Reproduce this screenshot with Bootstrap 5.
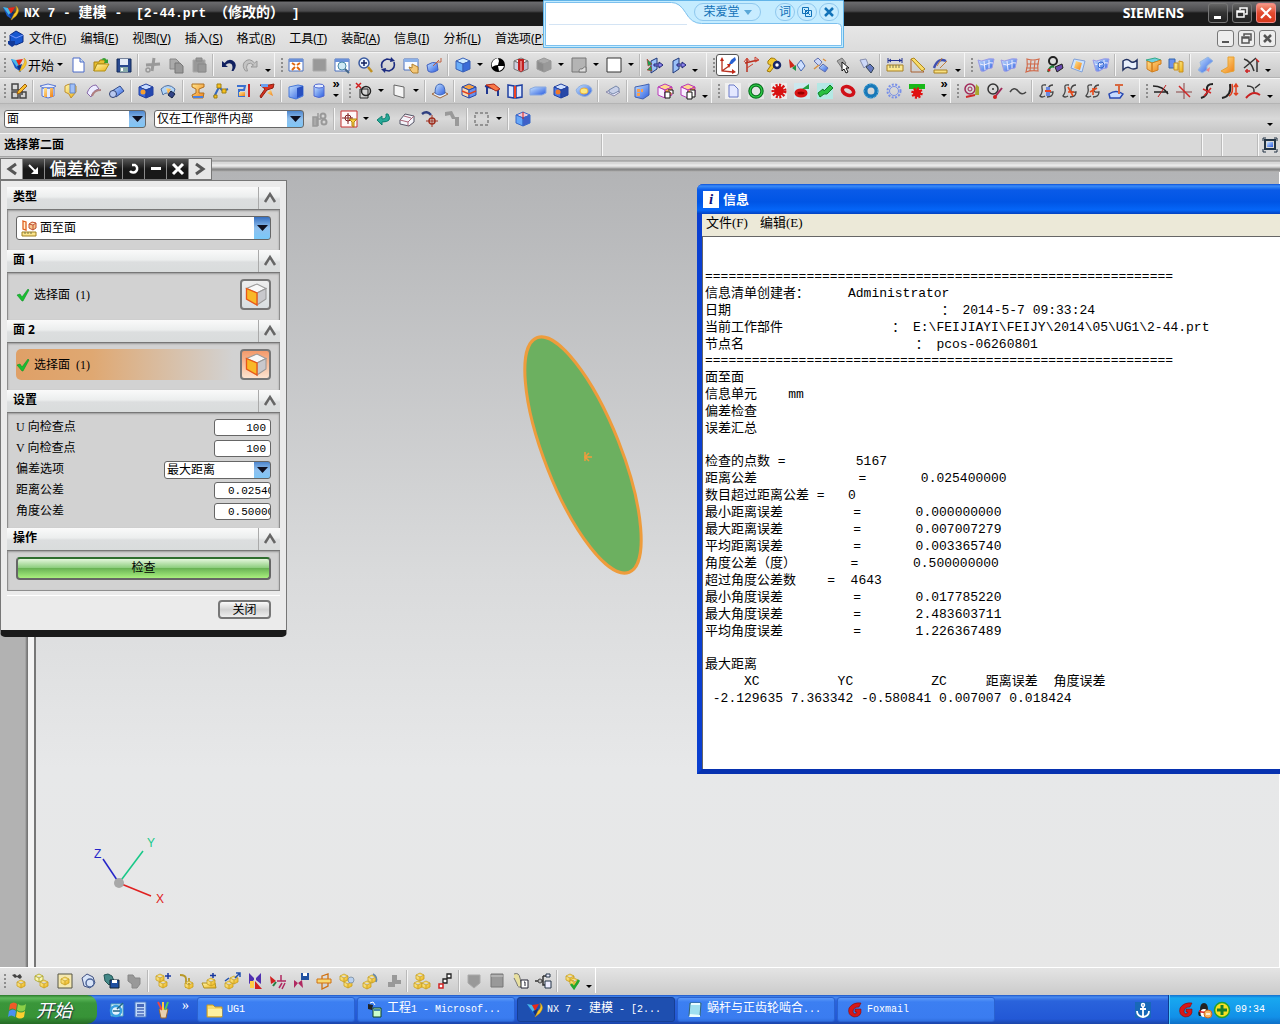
<!DOCTYPE html>
<html lang="zh-CN">
<head>
<meta charset="utf-8">
<meta name="viewport" content="width=device-width, initial-scale=1">
<title>NX 7 - 建模</title>
<link href="https://cdn.jsdelivr.net/npm/bootstrap@5.3.0/dist/css/bootstrap.min.css" rel="stylesheet">
<style>
:root{--ui:"Liberation Serif","Noto Sans CJK SC",serif;--sans:"Noto Sans","Noto Sans CJK SC",sans-serif;--mono:"Liberation Mono","Noto Sans CJK SC",monospace}
body{font:12px/16px var(--ui);color:#000;background:#d6d6d6}
button,input,select{font:inherit;color:inherit}
svg{display:block;flex:none}
a{color:inherit;text-decoration:none}
.bare{border:0;background:none;padding:0}
.titlebar{height:26px;background:linear-gradient(#000 0 1px,#6b6b6e 2px,#4b4b4d 11px,#1b1b1b 13px,#1b1b1b);color:#fff;font:bold 13px/24px var(--mono);padding:0 4px 0 2px}
.doctitle{white-space:pre;margin-left:4px}
.doctitle span{font-size:14px}
.docname{margin-left:6px}
.brand{font:bold 14px/24px "Noto Sans",sans-serif}
.wbtn{width:20px;height:20px;border:1px solid #777;border-radius:3px;background:linear-gradient(#666,#333 50%,#222);display:grid;place-items:center;padding:0}
.wbtn.red{background:linear-gradient(#f59a85,#e2492e 50%,#d8391c);border-color:#e88}
.wbtn.doc{width:17px;height:17px;background:#eee;border:1px solid #777}
.menubar{height:26px;background:linear-gradient(#e6e6e6,#dcdcdc);border-bottom:1px solid #c4c4c4;gap:14px;font:12px/24px var(--sans)}
.toolrow{height:26px;background:linear-gradient(#e4e4e4,#c9c9c9);border-bottom:1px solid #b4b4b4;box-shadow:inset 0 1px #f4f4f4}
.strip{display:flex;align-items:center;height:25px}
.strip+.strip{border-left:1px solid #f5f5f5}
.strip+.strip .grip{margin-left:2px}
.strip.apart{margin-left:5px}
.grip{width:7px;height:16px;background:radial-gradient(circle,#8d8d8d 1px,#0000 1px) 3px 0/4px 4px repeat-y;flex:none}
.tool{width:23px;height:22px;display:grid;place-items:center;border:0;background:none;padding:0;flex:none}
.tool.on{background:#fff;border:1px solid #555;border-radius:3px}
.startmenu{width:47px;padding-left:3px}
.startmenu span{font:13px/16px var(--sans)}
.drop{width:12px;height:22px;border:0;background:none;padding:0;flex:none;display:grid;place-items:center}
.drop::after{content:"";border:3px solid #0000;border-top-color:#000;border-bottom:0}
.drop.low{align-items:end}
.drop.low::after{margin-bottom:4px}
.more{width:12px;height:22px;font:bold 13px/8px "Liberation Sans",sans-serif;text-align:center}
.more::after{content:"";display:block;margin:6px 0 0 3px;width:6px;border:3px solid #0000;border-top-color:#000;border-bottom:0}
.spacer{width:10px}
.split{width:6px;height:22px;flex:none;background:linear-gradient(90deg,#0000 2px,#b9b9b9 2px 3px,#f6f6f6 3px 4px,#0000 4px)}
.pickbar{height:29px;background:linear-gradient(#c2c2c2,#d9d9d9 50%,#c6c6c6);padding:0 4px}
.combo{appearance:none;height:18px;border:1px solid #666;border-radius:3px;line-height:14px;padding:0 20px 0 2px;outline:0;
background:url("data:image/svg+xml,%3Csvg xmlns='http://www.w3.org/2000/svg' width='16' height='22'%3E%3ClinearGradient id='a' x2='0' y2='1'%3E%3Cstop stop-color='%23356fc0'/%3E%3Cstop offset='.5' stop-color='%2390c0ee'/%3E%3Cstop offset='1' stop-color='%2378c8f8'/%3E%3C/linearGradient%3E%3Cpath fill='url(%23a)' d='M0 0h16v22H0z'/%3E%3Cpath d='M3 8h11l-5.500 6z' fill='%23101020'/%3E%3C/svg%3E") right center no-repeat #fff}
.filter{width:142px}.scope{width:150px}.option{width:107px}
.kindsel{height:24px;padding-left:23px}
.statusbar{height:24px;background:#d9d9d9;border-top:1px solid #f4f4f4;border-bottom:1px solid #a4a4a4;font-weight:bold}
.cell{height:100%;border-left:1px solid #f8f8f8;box-shadow:-1px 0 #bbb}
.prompt{width:47%}.cell.a{width:20px}.cell.b{width:36px}.cell.c{width:22px}
.dockedge{height:15px;background:linear-gradient(#c2c2c2 0 3px,#8f8f8f 4px,#d8d8d8 5px 7px,#f0f0f0 8px,#d4d4d4 10px,#888 12px 13px,#bbb)}
.gutter{width:36px;background:linear-gradient(90deg,#b2b2b2 25px,#777 27px 28px,#f4f4f4 28px 34px,#777 34px)}
.scene{background:linear-gradient(#b3b4b6,#d9dadb 50%,#e7e8e9 75%,#e7e7e7);border-right:1px solid #fff}
.dlg{position:absolute;left:0;top:1px;width:287px}
.dlgtabs{height:22px;width:212px;background:#1c1c1c;color:#fff;border:1px solid #777}
.dlgtabs>button{width:22px;border:0;border-right:1px solid #888;padding:0;background:linear-gradient(#555,#181818 50%);display:grid;place-items:center}
.dlgtabs>.lite{background:#e6e6e6}
.dlgtabs h1{font:500 17px/19px var(--sans);background:linear-gradient(#555,#181818 50%);border-right:1px solid #888;text-align:center}
.dlgbody{background:#ebebeb;border:1px solid #777;border-bottom:7px solid #1a1a1a;border-radius:0 0 5px 5px;padding:6px 6px 11px}
.sect{height:23px;border:0;border-bottom:1px solid #777;background:linear-gradient(#fafafa,#eceeee 45%,#dcdedf 55%,#d9dcdc);font:bold 12px/20px var(--sans);padding:0 0 0 6px}
.sect svg{border-left:1px solid #aaa}
.pane{background:#d2d2d2;border:1px solid #8e8e8e;border-top:0;border-bottom:0;padding:0 8px 4px;box-shadow:inset 0 1px 2px #999}
.pane.kind{height:40px}
.pane.pick{height:47px}
.pane.settings{height:115px;padding-top:6px;row-gap:4px}
.settings>div{height:17px}
.pane.act{height:40px;padding-top:6px;border-bottom:1px solid #8e8e8e}
.pickrow{height:31px;border-radius:5px 0 0 5px}
.pickrow.hot{background:linear-gradient(90deg,#dfa067,#dfa872 30%,#d2d2d2 85%)}
.facebtn{width:31px;height:31px;border:2px solid #777;border-radius:4px;background:linear-gradient(#eee,#d9dfe2);display:grid;place-items:center;padding:0}
.hot .facebtn{background:linear-gradient(#f39a6b,#fde3cf)}
.num{width:57px;height:17px;border:1px solid #666;border-radius:3px;text-align:right;padding:0 4px;font:11px/15px var(--mono)}
.num.clipped{text-align:left;padding:0 0 0 13px}
.go{height:23px;border:2px solid #666;border-top-color:#2e6d2e;border-radius:4px;background:linear-gradient(#e4f6dc,#8fcf80 45%,#6ab455 50%,#a9f07e);padding:0;line-height:17px}
.foot{padding:4px 9px 0 0;margin-top:4px;border-top:1px solid #fff}
.closebtn{width:53px;height:19px;border:2px solid #777;border-radius:4px;background:linear-gradient(#fafafa,#d2d2d2 50%,#eee);padding:0;line-height:14px}
.info{position:absolute;left:697px;right:0;top:27px;height:590px;border:solid #0a3fd0;border-width:0 0 5px 5px;border-bottom-color:#0732b0;border-radius:6px 0 0 0;background:#ece9d8}
.infotitle{height:30px;margin-left:-5px;padding-left:6px;border-radius:6px 0 0 0;background:linear-gradient(#0a50d8,#3b8cf8 2px,#0a5be8 6px,#0055e5 18px,#0566f8 26px,#0340c0);color:#fff;font:bold 13px/16px var(--sans)}
.badge-i{width:16px;height:17px;background:#fff;color:#10107a;font:italic bold 15px/16px "Liberation Serif",serif;text-align:center}
.infomenu{height:22px;gap:12px;padding-left:4px;font-size:13px;line-height:18px}
.report{margin:0;overflow:hidden;background:#fff;border:1px solid #666;border-right:0;border-bottom:0;padding:31px 0 0 2px;font:13px/17px var(--mono);color:#000}
.report div{height:17px;white-space:pre}
.report .thin{height:16px;line-height:16px}
.lyric{position:absolute;left:543px;top:0;width:301px;height:48px;color:#1272b8}
.lyric .over{position:absolute;inset:3px 5px auto auto;gap:2px}
.pill{width:67px;height:18px;border:1px solid #8fc8ee;border-radius:9px;background:#c8ecff;padding:0;line-height:15px;margin-right:12px}
.dot{width:20px;height:18px;border:1px solid #8fc8ee;border-radius:9px;background:#c8ecff;display:grid;place-items:center;padding:0;line-height:15px}
.bottombar{height:28px;background:linear-gradient(#e4e4e4,#cbcbcb);border-top:1px solid #fff}
.taskbar{height:29px;background:linear-gradient(#1a56c8,#4a8bf0 2px,#2a63dc 6px,#2258d6 24px,#1b45a8);color:#fff;font:10px/16px var(--mono)}
.taskbar .han{font-size:12px}
.startbtn{width:97px;border:0;border-radius:0 10px 10px 0;background:linear-gradient(#2a7a2a,#5cb85a 3px,#3a963a 8px,#379337 22px,#256a25);color:#fff;font:italic 18px/26px var(--sans);text-shadow:1px 1px 1px #234;padding:0 0 0 8px}
.quick{padding-left:8px}
.chev{font:14px/10px var(--ui);margin:0 0 8px 8px}
.taskset{margin-left:8px;gap:2px}
.task{flex:0 1 158px;height:25px;border:1px solid #2a62d0;border-radius:3px;background:linear-gradient(#5c9af8,#3c7ff2 4px,#3a7cf0 20px,#3070e0);color:#fff;padding:0 8px;gap:3px;overflow:hidden;white-space:pre}
.task.now{background:#1e4fb0;border-color:#173f94}
.tray{width:112px;background:linear-gradient(#1470d0,#18a8f0 3px,#1290e8 22px,#0e70c8);border-left:1px solid #0c3c90;box-shadow:inset 1px 0 #4cc8ff;padding-left:8px}
</style>
<script src="https://cdn.jsdelivr.net/npm/bootstrap@5.3.0/dist/js/bootstrap.bundle.min.js"></script>
</head>
<body class="vh-100 d-flex flex-column overflow-hidden position-relative">
<svg width="0" height="0" class="position-absolute"><defs>
<linearGradient id="gb" x2="1" y2="1"><stop stop-color="#c8e4ff"/><stop offset="1" stop-color="#2a5ce0"/></linearGradient>
<linearGradient id="gy" x2="1" y2="1"><stop stop-color="#fff8b0"/><stop offset="1" stop-color="#eeb010"/></linearGradient>
<linearGradient id="go" x2="1" y2="1"><stop stop-color="#ffe890"/><stop offset="1" stop-color="#f08018"/></linearGradient>
</defs></svg>

<header class="titlebar d-flex align-items-center flex-shrink-0">
<span data-icon="nx"></span><span class="doctitle">NX 7 - <span>建模</span> -</span><span class="doctitle docname"> [2-44.prt <span>（修改的）</span> ]</span>
<span class="brand ms-auto me-4">SIEMENS</span>
<div class="d-flex gap-1">
<button class="wbtn" aria-label="最小化"><svg width="14" height="14"><path d="M3 10h7v3H3z" fill="#fff"/></svg></button>
<button class="wbtn" aria-label="还原"><svg width="14" height="14" fill="none" stroke="#fff" stroke-width="1.500"><path d="M5 4V2h7v6h-2M2 5h7v6H2zM2 6h7"/></svg></button>
<button class="wbtn red" aria-label="关闭"><svg width="14" height="14" stroke="#fff" stroke-width="2.200"><path d="M2 2l10 10M12 2 2 12"/></svg></button>
</div></header>

<nav class="menubar d-flex align-items-center flex-shrink-0 pe-1">
<div class="d-flex align-items-center"><span class="grip"></span><span data-icon="part" class="me-1"></span><a href="#">文件(<u>F</u>)</a></div>
<a href="#">编辑(<u>E</u>)</a><a href="#">视图(<u>V</u>)</a><a href="#">插入(<u>S</u>)</a><a href="#">格式(<u>R</u>)</a><a href="#">工具(<u>T</u>)</a><a href="#">装配(<u>A</u>)</a><a href="#">信息(<u>I</u>)</a><a href="#">分析(<u>L</u>)</a><a href="#">首选项(<u>P</u>)</a>
<div class="d-flex ms-auto gap-1">
<button class="wbtn doc" aria-label="最小化窗口"><svg width="13" height="13"><path d="M3 9h7v2H3z" fill="#555"/></svg></button>
<button class="wbtn doc" aria-label="还原窗口"><svg width="13" height="13" fill="none" stroke="#555" stroke-width="1.500"><path d="M4 4V2h7v6H9M2 5h7v6H2zM2 6h7"/></svg></button>
<button class="wbtn doc" aria-label="关闭窗口"><svg width="13" height="13" stroke="#555" stroke-width="2.500"><path d="M3 3l7 7M10 3l-7 7"/></svg></button>
</div></nav>

<div class="toolrow d-flex flex-shrink-0">
<div class="strip" data-tools="grip start new open save | cut copy paste | undo redo low"></div>
<div class="strip" data-tools="grip fit zoomsel zoombox zoom rotate pan persp | shade drop wire section graycube drop sheet drop white drop | exitg exit low"></div>
<div class="strip apart" data-tools="grip wcs* axes key movecs snap pointer snap2 | measure angle curvem low"></div>
<div class="strip" data-tools="grip surf surf2 mesh sweep ruled surf3 | bound layers studio | blend elbow trim low"></div>
</div>
<div class="toolrow d-flex flex-shrink-0">
<div class="strip" data-tools="grip sketch | extrude revolve sheetf tube | hole boss | spring path mirror trimred | block cyl more"></div>
<div class="strip" data-tools="grip xcircle drop plane drop | dome | edge offset book slab holec donut | pad | pattern paste1 paste2 low"></div>
<div class="strip" data-tools="grip page gring gearr helix screw ringr ringb gearb rack gap more"></div>
<div class="strip" data-tools="grip spiral circ wave | cline cline2 cline3 projc low"></div>
<div class="strip" data-tools="grip tcurve cross scurve jcurve arcs low"></div>
</div>
<div class="pickbar d-flex align-items-center flex-shrink-0">
<select class="combo filter" aria-label="类型过滤器"><option>面</option></select>
<select class="combo scope ms-2 me-1" aria-label="选择范围"><option>仅在工作部件内部</option></select>
<div class="strip flex-grow-1" data-tools="graygears | target drop back eraser cross2 grayarr | dashbox drop | redcube push low"></div>
</div>
<div class="statusbar d-flex align-items-center flex-shrink-0">
<span class="ps-1 prompt">选择第二面</span><span class="cell flex-grow-1"></span>
<span class="cell a"></span><span class="cell b"></span><span class="cell c d-flex align-items-center justify-content-center"><svg width="16" height="16" fill="none" stroke="#234"><path d="M1 4V1h3M12 1h3v3M15 12v3h-3M4 15H1v-3"/><path d="M3 3h10v9H3z" stroke-width="2"/><path d="M5 5h6v5H5z" fill="url(#gb)" stroke="none"/></svg></span>
</div>

<main class="flex-grow-1 d-flex flex-column position-relative overflow-hidden">
<div class="dockedge flex-shrink-0"></div>
<div class="d-flex flex-grow-1"><div class="gutter"></div>
<svg class="scene flex-grow-1 h-100" role="img" aria-label="模型视图">
<g transform="translate(547 283)"><ellipse rx="38" ry="126" transform="rotate(-21.500)" fill="#6cb060" stroke="#ee9c3c" stroke-width="3"/><path d="M1 2h8M6-2 2 2l4 4M2-3v9" stroke="#ee9c3c" stroke-width="1.500" fill="none"/></g>
<g transform="translate(83 711)" fill="none" stroke-width="1.500"><path d="M0 0-16-24" stroke="#2424c8"/><path d="M0 0l24-32" stroke="#18c888"/><path d="M0 0l32 13" stroke="#e02020"/><circle r="5" fill="#a8a8a8"/>
<g font-family="Liberation Sans" font-size="12" stroke="none"><text x="-25" y="-25" fill="#2424c8">Z</text><text x="28" y="-36" fill="#18c888">Y</text><text x="37" y="20" fill="#e02020">X</text></g></g>
</svg></div>

<section class="dlg">
<div class="dlgtabs d-flex">
<button class="lite" aria-label="上一个"><svg width="14" height="14" fill="none" stroke="#555" stroke-width="3"><path d="M11 2 4 7l7 5"/></svg></button>
<button aria-label="固定"><svg width="14" height="14" fill="none" stroke="#fff" stroke-width="2"><path d="M2 3l7 7"/><path d="M11 5v7H4z" fill="#fff" stroke="none"/></svg></button>
<h1 class="m-0 flex-grow-1">偏差检查</h1>
<button aria-label="重置"><svg width="14" height="14" fill="none" stroke="#fff" stroke-width="2.500"><path d="M5 3h3a4 4 0 1 1-5 6"/></svg></button>
<button aria-label="折叠"><svg width="14" height="14"><path d="M2 5h10v3H2z" fill="#fff"/></svg></button>
<button aria-label="关闭对话框"><svg width="14" height="14" stroke="#fff" stroke-width="3"><path d="M2 2l10 10M12 2 2 12"/></svg></button>
<button class="lite border-0" aria-label="下一个"><svg width="14" height="14" fill="none" stroke="#555" stroke-width="3"><path d="M3 2l7 5-7 5"/></svg></button>
</div>
<div class="dlgbody d-flex flex-column">
<button class="sect d-flex justify-content-between">类型<span data-up></span></button>
<div class="pane kind d-flex align-items-center position-relative"><select class="combo w-100 kindsel" aria-label="类型"><option>面至面</option></select><span class="position-absolute ms-1" data-icon="facepair"></span></div>
<button class="sect d-flex justify-content-between">面 1<span data-up></span></button>
<div class="pane pick d-flex align-items-center"><div class="pickrow d-flex align-items-center flex-grow-1"><span data-icon="tick"></span><span>选择面&nbsp; (1)</span><button class="facebtn ms-auto" aria-label="选择面 1" data-icon="face"></button></div></div>
<button class="sect d-flex justify-content-between">面 2<span data-up></span></button>
<div class="pane pick d-flex align-items-center"><div class="pickrow hot d-flex align-items-center flex-grow-1"><span data-icon="tick"></span><span>选择面&nbsp; (1)</span><button class="facebtn ms-auto" aria-label="选择面 2" data-icon="face"></button></div></div>
<button class="sect d-flex justify-content-between">设置<span data-up></span></button>
<div class="pane settings d-flex flex-column">
<div class="d-flex justify-content-between"><label for="u">U 向检查点</label><input id="u" class="num" value="100"></div>
<div class="d-flex justify-content-between"><label for="v">V 向检查点</label><input id="v" class="num" value="100"></div>
<div class="d-flex justify-content-between"><label for="opt">偏差选项</label><select id="opt" class="combo option"><option>最大距离</option></select></div>
<div class="d-flex justify-content-between"><label for="dt">距离公差</label><input id="dt" class="num clipped" value="0.025400000"></div>
<div class="d-flex justify-content-between"><label for="at">角度公差</label><input id="at" class="num clipped" value="0.500000000"></div>
</div>
<button class="sect d-flex justify-content-between">操作<span data-up></span></button>
<div class="pane act"><button class="go w-100">检查</button></div>
<div class="foot d-flex justify-content-end"><button class="closebtn">关闭</button></div>
</div>
</section>

<section class="info d-flex flex-column">
<div class="infotitle d-flex align-items-center gap-1"><span class="badge-i">i</span><span>信息</span></div>
<div class="infomenu d-flex"><a href="#">文件(F)</a><a href="#">编辑(E)</a></div>
<div class="report flex-grow-1"><div>============================================================</div><div>信息清单创建者：     Administrator</div><div>日期                           ： 2014-5-7 09:33:24</div><div>当前工作部件              ： E:\FEIJIAYI\FEIJY\2014\05\UG1\2-44.prt</div><div>节点名                      ： pcos-06260801</div><div class="thin">============================================================</div><div>面至面</div><div>信息单元    mm</div><div>偏差检查</div><div>误差汇总</div><div class="thin"> </div><div>检查的点数 =         5167</div><div>距离公差             =       0.025400000</div><div>数目超过距离公差 =   0</div><div>最小距离误差         =       0.000000000</div><div>最大距离误差         =       0.007007279</div><div>平均距离误差         =       0.003365740</div><div>角度公差（度）       =       0.500000000</div><div>超过角度公差数    =  4643</div><div>最小角度误差         =       0.017785220</div><div>最大角度误差         =       2.483603711</div><div>平均角度误差         =       1.226367489</div><div class="thin"> </div><div>最大距离</div><div>     XC          YC          ZC     距离误差  角度误差</div><div> -2.129635 7.363342 -0.580841 0.007007 0.018424</div></div>
</section>
</main>

<div class="bottombar d-flex flex-shrink-0"><div class="strip border-end border-white" data-tools="grip find openc yframe poly savec graypuz | addc yarm newc movec bow constr bowsave explode chainc swap grayplus | tree chain | grayshield graybox clipinfo nodes | import low"></div></div>

<footer class="taskbar d-flex align-items-stretch flex-shrink-0">
<button class="startbtn d-flex align-items-center gap-2"><svg width="20" height="20"><path d="M2 4q4-3 7 0L8 10q-4-3-7 0z" fill="#f05a28"/><path d="M10 4q4 3 8 0l-1 6q-4 3-8 0z" fill="#8cd048"/><path d="M1 11q4-3 7 0l-1 6q-4-3-7 0z" fill="#4a90f0"/><path d="M9 11q4 3 8 0l-1 6q-4 3-8 0z" fill="#fcd030"/></svg>开始</button>
<div class="d-flex align-items-center quick"><span class="tool" data-icon="edge2"></span><span class="tool" data-icon="calc"></span><span class="tool" data-icon="pens"></span><span class="chev">»</span></div>
<div class="d-flex align-items-center flex-grow-1 taskset">
<button class="task d-flex align-items-center"><span data-icon="folder"></span><span>UG1</span></button>
<button class="task d-flex align-items-center"><span data-icon="vb"></span><span><span class="han">工程</span>1 - Microsof...</span></button>
<button class="task now d-flex align-items-center"><span data-icon="nx"></span><span>NX 7 - <span class="han">建模</span> - [2...</span></button>
<button class="task d-flex align-items-center"><span data-icon="note"></span><span><span class="han">蜗杆与正齿轮啮合</span>...</span></button>
<button class="task d-flex align-items-center"><span data-icon="fox"></span><span>Foxmail</span></button>
<span class="ms-auto me-3" data-icon="anchor"></span></div>
<div class="tray d-flex align-items-center"><span data-icon="fox"></span><span data-icon="qq"></span><span data-icon="plus"></span><span class="ms-1">09:34</span></div>
</footer>

<aside class="lyric"><svg width="301" height="48"><path d="M0.500 0.500h300v47H.5z" fill="#c4ecff" stroke="#62b4e8"/><path d="M2.500 2.500h126q8 0 14 10 6 11 16 11h136q4 0 4 4v18H2.500z" fill="#fff" stroke="#7cc0ee"/><path d="M6 24.500h138" stroke="#d4e4f4"/></svg>
<div class="over d-flex"><button class="pill d-flex align-items-center justify-content-center">荣爱堂 <svg class="ms-1" width="8" height="5"><path d="M0 0h8L4 5z" fill="#5aa8d8"/></svg></button><button class="dot">词</button><button class="dot" aria-label="窗口"><svg width="10" height="10" fill="none" stroke="#1272b8"><path d="M.5.5h6v6h-6zM3.500 3.500h6v6h-6zM2 2l6 6"/></svg></button><button class="dot" aria-label="关闭歌词"><svg width="10" height="10" stroke="#1272b8" stroke-width="2.500"><path d="M1 1l8 8M9 1 1 9"/></svg></button></div></aside>

<script>
// Icon drawings, all on an 18 x 18 grid.
const p=(d,f='none',s='none',w=1)=>`<path d="${d}" fill="${f}" stroke="${s}" stroke-width="${w}"/>`;
const c=(x,y,r,f='none',s='none',w=1)=>`<circle cx="${x}" cy="${y}" r="${r}" fill="${f}" stroke="${s}" stroke-width="${w}"/>`;
const cube=(t,l,r,s)=>p('M2 5l7-3 7 3-7 3z',t,s)+p('M2 5l7 3v8l-7-3z',l,s)+p('M16 5 9 8v8l7-3z',r,s);
const mini=(x,y,f='url(#gy)',s='#c8a020')=>p(`M${x} ${y+2}l4-2 4 2v4l-4 2-4-2zm0 0 4 2 4-2m-4 2v4`,f,s,.8);
const teeth=(col,w,r=5.500)=>`<circle cx="9" cy="9" r="${r}" fill="none" stroke="${col}" stroke-width="${w}" stroke-dasharray="2 1.450"/>`;
const surf=p('M1 4q3 2 7 0t9-1l-2 9q-4 0-6 2t-5 1z','url(#gb)','#9a9ae8')+p('M3 8q4 2 7 0t6-1M7 5l1 9M12 4v8','none','#eef');
const cl=p('M8 3Q3 2 4 6t-2 8q2 2 5 0M15 3q-4 0-5 4t5 3q0 5-6 5','none','#444',1.300);
const icons={
nx:p('M1 3l7 3 3 10-6-4z','#1a58c8')+p('M1 3l5 1 4 6-3 1z','#48b8e8')+p('M6 4l7-1-4 7z','#e82818')+p('M7 10l5-2-2 8z','#103080')+p('M14 2q5 4 0 10l-5 4 3-6q4-3 2-8','#f8c828','#c89010',.5),
part:p('M3 5l6-4 7 4v7l-7 3-6-3z','#1858d0','#0a2a80')+p('M3 5l6 3 7-3','none','#79f')+p('M1 11h7v4l-3 2-4-3z','#123a9a'),
new:p('M4 2h7l4 4v10H4z','#fff','#4a6ac8')+p('M11 2v4h4','#cde','#4a6ac8'),
open:p('M2 6h5l1-2h5v4H5l-3 7z','#e8c030','#a88010')+p('M5 8h12l-4 7H2z','url(#gy)','#b09018')+p('M9 4q3-4 6 0l1-1v4h-4l1-2q-2-2-4-1','#38a030'),
save:p('M2 3h14v13H2z','#2a4a90','#102858')+p('M5 3h8v6H5z','#e4ecf8')+p('M5 11h8v5H5z','#8aa')+p('M6 12h2v3H6z','#fff'),
cut:p('M10 2 8 15M2 9l14-1','none','#999',3)+c(4,14,2,'none','#999',1.500),
copy:p('M3 3h6l3 3v7H3z','#aaa','#888')+p('M8 7h5l3 3v7H8z','#999','#777'),
paste:p('M3 4h12v12H3z','#999','#aaa')+p('M6 2h6v3H6zM8 8h8v8H8z','#999','#888'),
undo:p('M3 5v6h6L6.500 9q3-3 6-1 2 3 0 7l2 0q4-5 1-9-5-5-10 1z','#102060'),
redo:p('M15 5v6H9l2.500-2q-3-3-6-1-2 3 0 7l-2 0q-4-5-1-9 5-5 10 1z','#c4c4c4','#999'),
fit:p('M2 3h14v12H2z','#fff','#4a70c0')+p('M2 3h14v3H2z','#6a90d8')+p('M5 7l3 2M13 7l-3 2M5 14l3-3M13 14l-3-3','none','#e06810',2),
zoomsel:p('M3 3h13v12H3z','#999','#aaa'),
zoombox:p('M2 3h14v12H2z','#fff','#4a70c0')+p('M2 3h14v3H2z','#6a90d8')+c(9,10,4,'#cfeaf4','#4888a8')+p('M12 13l4 4','none','#468',2),
zoom:c(8,7,5,'#eaf4ff','#3a5aa0',1.500)+p('M5 7h6M8 4v6','none','#102060',1.500)+p('M12 11l4 5','none','#c09020',2.500),
rotate:p('M3 12Q1 5 8 3l5 1M15 6q2 7-5 9l-5-1','none','#1c2c80',1.600)+p('M12 1l4 4-5 1zM6 17l-4-4 5-1z','#1c2c80'),
pan:p('M2 3h14v11H2z','#f8fbff','#4a70c0')+p('M2 3h14v3H2z','#8ab0e8')+p('M9 15l-2-4 3 1V8l6 3v6h-5z','#f4c878','#b08030'),
persp:p('M2 9q6-4 10-2l1 7q-6 4-10 1z','url(#gb)','#4060c0')+p('M8 10l6-6m2-2v4h-4','none','#c06040'),
shade:cube('#d0ecff','#6aaef8','#3a6cd8','#3860b8'),wire:c(9,9,7,'#000')+p('M9 2a7 7 0 0 0-6 9q3-2 6-2l1-4zM9 10h6q-1 4-5 5z','#fff'),
section:cube('#eee','#ccd','#bbc','#777')+p('M6 3h6v11l-3 2-3-2z','#c02020')+p('M9 5v10','none','#fcc'),
graycube:cube('#aaa','#8c8c8c','#999','#999'),
sheet:p('M2 2h14v14H2z','#b4b4b4','#777')+p('M9 16q0-4 3-3 3-3 4-2v5z','#ddd','#777'),
white:p('M2 2h14v14H2z','#fff','#333'),
exitg:p('M5 5l6-3v11l-6 4z','#9ac0f8','#203878')+p('M8 8h5V6l4 3-4 3v-2H8z','#8a80e8','#202878')+p('M1 3l5 5-4 2zM5 10l-4 4 5 1z','#18a050','#c02020',.5),
exit:p('M4 5l6-3v11l-6 4z','#9ac0f8','#203878')+p('M8 8h5V6l4 3-4 3v-2H8z','#8a80e8','#202878'),
wcs:p('M3 3v12l11 1M3 15l7-5','none','#b83020',1.300)+p('M1 5l2-4 2 4zM13 13l4 3-4 2zM8 8h4l-2 4z','#c02818')+p('M10 8l2-4 4-3 1 3-4 4z','#2860d0'),
axes:p('M5 3v13M3 7l13-3','none','#b83020',1.500)+p('M2 6l3-4 3 4M13 1l4 3-4 2zM5 12l6-4','none','#d04030'),
key:p('M6 2q6 0 6 5L5 16l-3-1 4-6q-4 0-3-4z','#f0c830','#a07808')+c(12,9,3,'#fff','#182868',2.500),
movecs:p('M1 3l6 7-5 2z','#d02818')+p('M4 12l4 3V9z','#209040')+p('M9 9l4-5 4 6-4 5z','#cfe0ff','#4868b0'),
snap:p('M3 5l4-3 4 4-3 4z','#ccd8f8','#6070b0')+p('M8 12l4-4 5 4-3 4z','url(#gb)','#6070b0')+p('M3 13l5-4M12 3l3 2','none','#d89040',1.500),
pointer:p('M3 5l5-3 4 5-4 5z','#aaa','#777')+p('M8 6v9l2-2 2 4 2-1-2-4h3z','#fff','#111'),
snap2:p('M3 4l6-1 2 5-4 4z','#ccd8f8','#8890b0')+p('M9 11l4-3 4 4-3 5z','#667ac0','#345'),
measure:p('M1 9h16v6H1z','#fbe890','#a88020')+p('M4 9v3M7 9v3M10 9v3M13 9v3','none','#775')+p('M2 2v5M16 2v5M2 4.500h14M5 3 3 4.500 5 6M13 3l2 1.500L13 6','none','#203090'),
angle:p('M2 3l13 13H2z','none','#a86030')+p('M2 3l3-1 11 11-3 2z','#f8dc68','#b08820'),
curvem:p('M2 12Q6 1 14 5','none','#4050b0',2.500)+p('M2 14h13v3H2z','#f8e080','#a88020')+p('M5 10l5-8M8 12l7-7','none','#c08040'),
surf,surf2:surf,surf3:surf+c(9,9,3,'none','#36c'),
mesh:p('M4 3q6 2 12 0-2 6-1 12-7-1-12 1 2-6 1-13zM8 4 7 15M12 4l-1 11M4 8h12M3 12h12','none','#d06848',1.100),
sweep:c(7,5,4,'#ddd','#222',2)+p('M2 16q2-7 6-5','none','#208038',2)+p('M9 11l7-3 1 4-6 4z','#6848b0','#222')+c(3,14,1.500,'#c22'),
ruled:p('M5 3l11 2-3 11L2 12z','#cce4ff','#80a0d8')+p('M7 5l6 2-2 7-6-2z','url(#go)'),
bound:p('M2 5q4-3 7 0t7-1v8q-4 2-7 0t-7 2z','#e8f0fc','#203060',1.500),
layers:p('M2 4l9-2 6 2-9 3z','#70d0e0','#3a8')+p('M3 5l5 2v9l-5-3zM8 7l9-3v4l-3 1v5l-6 2z','url(#go)','#d08020'),
studio:p('M2 3h6v9H2z','#6a90f0','#36a')+p('M7 7h4v7H7zM12 5l4 1v10h-4z','url(#gy)','#c89020'),
blend:p('M4 6l8-5 5 4-6 5v4l-5 3-4-3 3-4z','url(#gb)','#98b8e0')+p('M10 14l4-3-1 5z','#e88'),
elbow:p('M9 1h6v14l-9 2-4-2 7-4z','url(#go)','#e8a030'),
trim:p('M2 3q7 2 10 12M14 2 2 12M15 4v12','none','#333',1.500)+p('M5 13v4M3 15h5M14 3l3 3','none','#c22',1.500),
sketch:p('M2 2h6v6H2zM2 10h6v6H2zM10 10h6v6h-6zM5 8h7v5','none','#444',1.500)+p('M8 9l7-7 2 2-7 7-3 1z','#f8c030','#a06010'),
extrude:p('M1 4l8-2 8 2-3 2H4zM3 6h12v8l-6 2-6-2z','#e4ecff','#5a78d0')+p('M5 6h3v9H5zM11 6h3v9h-3z','url(#go)'),
revolve:p('M3 4q6-4 11 0v6l-5 6-2-4-4-2z','url(#gy)','#c09030')+p('M8 2h5v9H8z','#a0c0f8','#68c'),
sheetf:p('M2 11Q5 3 11 3l3 4Q8 8 6 15z','#ececff','#8868a8')+p('M7 14q2-6 9-6','none','#b08080',2),
tube:p('M4 9l8-5 4 5-8 6z','url(#gb)','#304888')+c(5,12,3.500,'#b8c8f0','#304070'),
hole:cube('#c8dcff','#3668e0','#2448b0','#2440a0')+c(6,10,2.500,'#f8a030'),
boss:p('M1 7q7-7 14 0l-2 6q-7-4-10 0z','#b0d4f8','#5070a0')+p('M6 6l5 1-3 5z','url(#go)')+p('M11 9l4 3-3 4-4-3z','#348','#124'),
spring:p('M3 2h12v3l-5 2v4h5l-1 5H4l-1-3 4-2V7L3 5z','url(#go)','#b07020')+p('M4 14h10v2H4z','#4a80e0'),
path:p('M2 15l5-10 4 4 5-2','none','#3468c0',2)+p('M5 2h4v4H5zM10 7h4v4h-4zM2 13h3v3H2z','#f8c020','#a08010'),
mirror:p('M2 4h8l-1 4H4v6h6','none','#3a70d0',2)+p('M4 10h6v4H4z','url(#go)')+p('M14 2v13','none','#c22',2),
trimred:p('M2 3h9l5-1-1 4-6 2-6 8-1-2 5-7z','#d83020','#902010')+p('M3 2h7v3H3z','#6aa0f0')+p('M9 11l4-3 2 6z','url(#go)'),
block:p('M2 5l9-2 5 1v10l-7 3-7-2z','url(#gb)','#4878d8')+p('M10 6v10l6-3V4z','#2850c0'),
cyl:p('M4 4v10q5 3 10 0V4z','url(#gb)','#5068d0')+'<ellipse cx="9" cy="4" rx="5" ry="2" fill="#e4ecff" stroke="#5068d0"/>',
xcircle:p('M5 7h8v9H5z','none','#222')+c(11,9,4.500,'none','#222',1.500)+p('M1 1l5 5M6 1 1 6','none','#d02020',1.500),
plane:p('M4 3l10 2v11L4 13z','#f4f4f4','#666'),
dome:p('M1 12l8-4 8 4-8 4z','#e8f0ff','#a06838')+p('M4 11q0-9 5-9t5 9q-5 4-10 0','url(#gb)','#4068b8'),
edge:cube('#f8a040','#f8d8b0','#6890f0','#2848a8')+p('M2 9l7 3 7-3','none','#e04020',1.500),
offset:p('M2 4l13 4v6M4 3v9','none','#203890',2)+p('M3 3l8-1 6 5-4 2z','#f87848','#b02818'),
book:p('M2 3l6 1v12l-6-1zM16 3l-6 1v12l6-1z','#dce8ff','#2040a0',1.500)+p('M8 4h2v12H8z','#f04020'),
slab:p('M1 7l5-2h11v6l-4 2H1z','url(#gb)','#88a8e0'),
holec:cube('#d0e0ff','#4878e8','#2848a8','#2040a0')+c(6,10,2.500,'#f07828'),
donut:p('M1 8q4-6 10-5t6 6q-4 7-10 5T1 8','url(#gb)','#90b0e0')+'<ellipse cx="9" cy="9" rx="4" ry="3" fill="#fbe880" stroke="#e8b040"/>',
pad:p('M2 10l6-3 8 3-6 4z','#eef','#88a')+p('M5 8l7-4 3 2v3l-6 3-4-2z','#c8d0e8','#78a'),
pattern:p('M2 5l10-2 4-1v11l-6 4-8-2z','url(#gb)','#4060b0')+p('M4 7h3v3H4zM8 7h2v3H8zM4 11h3v3H4z','#f8a050'),
paste1:cube('#ffd890','#f8f0ff','#f8a050','#b838b8')+p('M9 10h5v6H9zM12 8h5v4','#fff','#111'),
paste2:cube('#ffd890','#f8f0ff','#f8a050','#b838b8')+p('M8 10h5v7H8zM11 8h5v7h-3','#fff','#111'),
page:p('M1 1h16v16H1z','#f0f0f0')+p('M5 3h5l4 4v8H5z','#e4e8ff','#6878c8'),
gring:p('M1 1h16v16H1z','#e4e4e4')+c(9,9,6,'none','#0a7020',3.500)+c(9,9,6,'none','#30d048',1.200),
gearr:p('M1 1h16v16H1z','#ececec')+c(9,9,5,'#d81010')+teeth('#d81010',3,6),
helix:p('M1 1h16v16H1z','#cce8ee')+'<ellipse cx="8" cy="11" rx="5" ry="3" fill="#900" stroke="#d81818" stroke-width="3"/>'+p('M9 7l7-5v5z','#20a040'),
screw:p('M1 1h16v16H1z','#b4e8e4')+p('M2 11l5-4 1 2 6-6 3 3-6 6-3 0-4 3z','#28c040','#108028'),
ringr:'<ellipse cx="9" cy="9" rx="6" ry="4" fill="none" stroke="#d01018" stroke-width="3.500" transform="rotate(25 9 9)"/>',
ringb:c(9,9,5.500,'none','#1878b8',4)+teeth('#68b8e0',1,7),
gearb:c(9,9,4.500,'none','#7890e8',1)+teeth('#7890e8',2,6.500),
rack:p('M1 2h16v5H1z','#18b818')+c(9,11,4,'#e01010')+`<g transform="translate(0 2)">${teeth('#e01010',2.500,4.500)}</g>`,
spiral:c(7,7,5,'none','#a02858',1.500)+c(7,7,2,'none','#a02858')+p('M13 2l3 3v8h-4z','#a8a830')+p('M3 15l9-2','none','#d02828',2),
circ:c(7,7,5,'none','#333',1.500)+c(7,7,1,'#333')+p('M8 16l8-10','none','#a02858',2)+c(9,15,2,'#d02020'),
wave:p('M1 10q4-6 8-1t8 1','none','#444',1.500),
cline:cl+p('M8 5h4v9H8z','#6888e0')+p('M7 9h6','none','#f04020',2),
cline2:cl+p('M7 5l5 9M7 10h6','none','#e84818',1.600),cline3:cl+p('M6 10l7-4M9 6v7','none','#e84818',1.600),
projc:p('M2 12q7-5 14 0l-3 4H3z','#c8dcff','#2848b0',1.500)+p('M8 2h8v2h-3v8h-2V4H8z','#d86840'),
tcurve:p('M1 4q10 0 15 8M2 10h14','none','#222',1.500)+p('M6 15l8-12','none','#c02020'),
cross:p('M9 1v16M1 10h16','none','#844',1)+p('M4 4l11 11','none','#d02828',1.500),
scurve:p('M15 2q-7 0-6 6t-6 8','none','#222',2)+p('M5 7l8 4M13 6l-7 8','none','#d02828',1.500),
jcurve:p('M9 2q2 12-8 14','none','#222',2)+p('M11 2q2 9-3 12M15 3v9m-2-7 2-3 2 3m-4 6 2 2 2-2','none','#e04020',1.500),
arcs:p('M2 16q7-8 14-3','none','#c82020',2)+p('M3 4q8 0 7 6M11 6l5-4','none','#333',1.500),
graygears:p('M2 7h4v9H2zM7 3v13M7 9h3','#aaa','#999',1.500)+c(12,6,2.500,'none','#999',2)+c(13,12,2.500,'none','#999',2),
target:p('M1 1h16v16H1z','#fff8f8','#c83030')+p('M8 3v11M2 8h11','none','#802020')+c(8,8,3,'none','#802020')+p('M9 9h8l-3 3v5l-2-1v-4z','#f8d040','#b08010'),
back:p('M13 4q5 8-6 8v3L2 10l5-4v3q5 0 4-5z','#28a898','#108070'),
eraser:p('M2 10l5-6 9 2v6l-5 4-9-2z','#f4f4fa','#556')+p('M2 10l8 2 6-6M10 12v4M6 6l7 2','none','#a67'),
cross2:p('M11 5v12M5 11h12','none','#a03020')+c(11,11,3,'none','#a03020',1.500)+p('M1 4q5-4 9 1','none','#304080',2.500),
grayarr:p('M1 2l7-1 3 6h4v9h-4v-7H8l-2-4-5 1z','#999'),
dashbox:'<path d="M2 3h13v12H2z" fill="none" stroke="#555" stroke-dasharray="3 2"/>',
redcube:cube('#f0c8d8','#68a8f8','#4060c8','#3868c8')+p('M9 2v7','none','#d02020'),
find:mini(7,8)+p('M2 3l3-1 2 2 3-2 2 3-2 2-3-2-2 1z','#444'),
openc:mini(7,8)+mini(2,2,'#fbf8b0','#a8a020'),
yframe:p('M2 2h14v14H2z','#f4e8b0','#554')+mini(5,5),
poly:p('M3 6l5-4 6 3 2 6-5 5-6-2z','#d8e4f8','#405080')+c(11,11,4,'none','#50689a',1.500),
savec:p('M2 3l4-1 4 2 2 5-5 4-4-4z','#488','#255')+p('M8 8h9v8H8z','#2050a0','#123')+p('M10 8h5v3h-5z','#fff'),
graypuz:p('M3 3h5l2 3h5v6l-3 4H7v-4l-4-3z','#999','#888'),
addc:mini(5,8)+mini(2,2)+p('M14 1v6M11 4h6','none','#1838a0',1.500),
yarm:p('M3 3q6 0 6 4v9M12 6v10','none','#b89828',1.800)+mini(8,9),
newc:p('M2 11h13l1 5H4z','url(#gy)','#b09020')+mini(7,6)+p('M13 1v5M10 3.500h6','none','#1838a0',1.500),
movec:mini(2,9)+mini(7,4)+p('M12 6l5-5m-4 0h4v4M6 6 2 9','none','#2050b0',1.500),
bow:p('M3 1l5 5v2L3 12zM15 1l-5 5v2l5 4z','#5030b0')+p('M9 9l7 8H9z','#d02020')+p('M4 9h4v7H4z','#fc4'),
constr:p('M1 4l6 5-5 3z','#d02020')+p('M12 3v6M8 9h9M10 16l3-5M13 17l3-6','none','#b02860',1.500)+p('M4 14l3-4','none','#208040',2),
bowsave:p('M2 8l4 3-4 5zM10 8l-4 3 5 5z','#b02860')+p('M9 1h8v7H9z','#2050a0')+p('M11 1h4v3h-4z','#fff'),
explode:p('M7 4l6-2v12l-6 3z','none','#d07010',1.300)+p('M2 7h14v4H2z','#f8d870','#d07010'),
chainc:mini(2,2)+mini(6,8)+c(13,8,3,'#b8d0f0','#89a'),
swap:mini(2,9)+mini(7,3)+p('M12 2q5 3 3 8','none','#68a',1.500),
grayplus:p('M8 3h5v5h4v4h-6v3H4v-5h4z','#999'),
tree:mini(3,1)+mini(1,9)+mini(9,9),
chain:p('M11 2h4v4h-4zM7 7h4v4H7z','#fff','#222',1.300)+p('M3 12h4v4H3z','#fff','#d02020',1.500),
grayshield:p('M3 3h12v8l-6 5-6-5z','#999','#aaa'),graybox:p('M3 2h12v13H3z','#999','#777')+p('M3 4h12','none','#ccc'),
clipinfo:p('M3 2q5-2 6 4l2 8q-4 3-5-2L3 6','#e8e0a0','#777')+p('M10 8h7v8h-7z','#fff','#223')+p('M13 10h1v4','none','#223'),
nodes:p('M1 9h8M9 4h6M9 4v9h4','none','#333',1.500)+c(6,9,2,'#bbb','#444')+p('M12 2h4v3h-4zM11 9h6v7h-6z','#eef','#234'),
import:mini(3,2)+mini(7,6)+p('M8 12l3 4 5-8','none','#20a830',2.500),
facepair:p('M3 2l3 1v8l-3-1z','#fff0d0','#e06020',1.300)+p('M9 5l3-2 4 1v5l-3 2-4-2zm0 0 4 1 3-2m-3 2v5','#f8c890','#c05030')+p('M2 13h14v4H2z','#fbe48c','#a08020')+p('M5 13v2M8 13v2M11 13v2','none','#774'),
tick:p('M1 9l3-1 2 3 6-8 1 1-6 11H6z','#18c030','#109028',.6),
face:p('M3 5l7-3 6 3-6 3z','#f8f8f8','#999',.7)+p('M16 5l-6 3v8l6-4z','#c8c8cc','#999',.7)+p('M3 5l7 3v8l-7-4z','#f8b828','#e85818',.9),
edge2:p('M3 3h12v12H3z','#e8f4ff','#5ab')+c(8,10,5,'none','#38a0e0',2.500)+p('M5 10h7M9 8l6-6','none','#268',1.500),
calc:p('M4 1h11v15H4z','#c0d8f8','#4878c8')+p('M6 3h7v3H6z','#4868b8')+p('M6 8h7M6 11h7M6 14h7','none','#4868b8',1.500),
pens:p('M5 8h9l-2 9H7z','#e8d0b0','#963')+p('M4 1l4 8','none','#e44',2)+p('M9 1v8','none','#fc4',2)+p('M14 1l-3 8','none','#5c5',2),
folder:p('M1 4h6l2 2h7v10H1z','#f8dc70','#c89820')+p('M2 8h14v7H2z','#fff0a0'),
vb:p('M7 7h8v9H7z','#cfc','#142')+p('M2 3l5 1-1 5-4-1z','#222')+p('M8 9h6','none','#48a',2)+p('M4 2l3-1 2 3','none','#fff'),
note:p('M4 2h11l-1 13H3z','#a0e0f0','#367')+p('M5 2h9v2H5zM4 13l10 1v2H3z','#e8fcff'),
fox:p('M15 2Q7 1 3 7q-2 7 5 9 8 0 7-8H9v3h2q-2 4-4 0 0-5 6-5z','#d81818','#700',.5),
anchor:p('M1 1h16v16H1z','#1868b8')+c(9,4,1.500,'none','#fff',1.500)+p('M9 6v10M6 8h6M3 10q0 5 6 6 6-1 6-6','none','#fff',1.800),
qq:p('M4 15q-2-4 1-6 0-7 4-7t4 7q3 2 1 6z','#222')+'<ellipse cx="9" cy="12" rx="3.500" ry="4" fill="#fff"/>'+p('M4 9q5 3 10 0v2q-5 2-10 0z','#e02020')+c(13,13,4,'#f8b860','#c62')+p('M11 13h4','none','#fff',1.500),
plus:c(9,9,7.500,'#f8e020','#20a030',1.500)+p('M9 4v10M4 9h10','none','#188028',3)
};
const svg=(n,s=18)=>`<svg width="${s}" height="${s}" viewBox="0 0 18 18" aria-hidden="true">${icons[n]}</svg>`;
const drop='<button class="drop" aria-label="下拉"></button>';
const special={grip:'<span class="grip"></span>','|':'<span class="split"></span>',drop,low:'<button class="drop low" aria-label="工具条选项"></button>',more:'<span class="more">»</span>',gap:'<span class="spacer"></span>',push:'<span class="ms-auto"></span>',
start:`<button class="bare startmenu d-flex align-items-center">${svg('nx')}<span>开始</span></button>`+drop};
document.querySelectorAll('[data-tools]').forEach(bar=>{bar.innerHTML=bar.dataset.tools.split(' ').map(t=>{
 if(special[t])return special[t];const n=t.replace('*','');return `<button class="tool${n!==t?' on':''}" aria-label="${n}">${svg(n)}</button>`}).join('')});
document.querySelectorAll('[data-icon]').forEach(e=>{e.innerHTML=svg(e.dataset.icon,e.classList.contains('facebtn')?27:18)});
document.querySelectorAll('[data-up]').forEach(e=>{e.innerHTML='<svg width="22" height="22" fill="none" stroke="#666" stroke-width="2.500"><path d="M6 15l5-8 5 8"/></svg>'});
</script>
</body>
</html>
